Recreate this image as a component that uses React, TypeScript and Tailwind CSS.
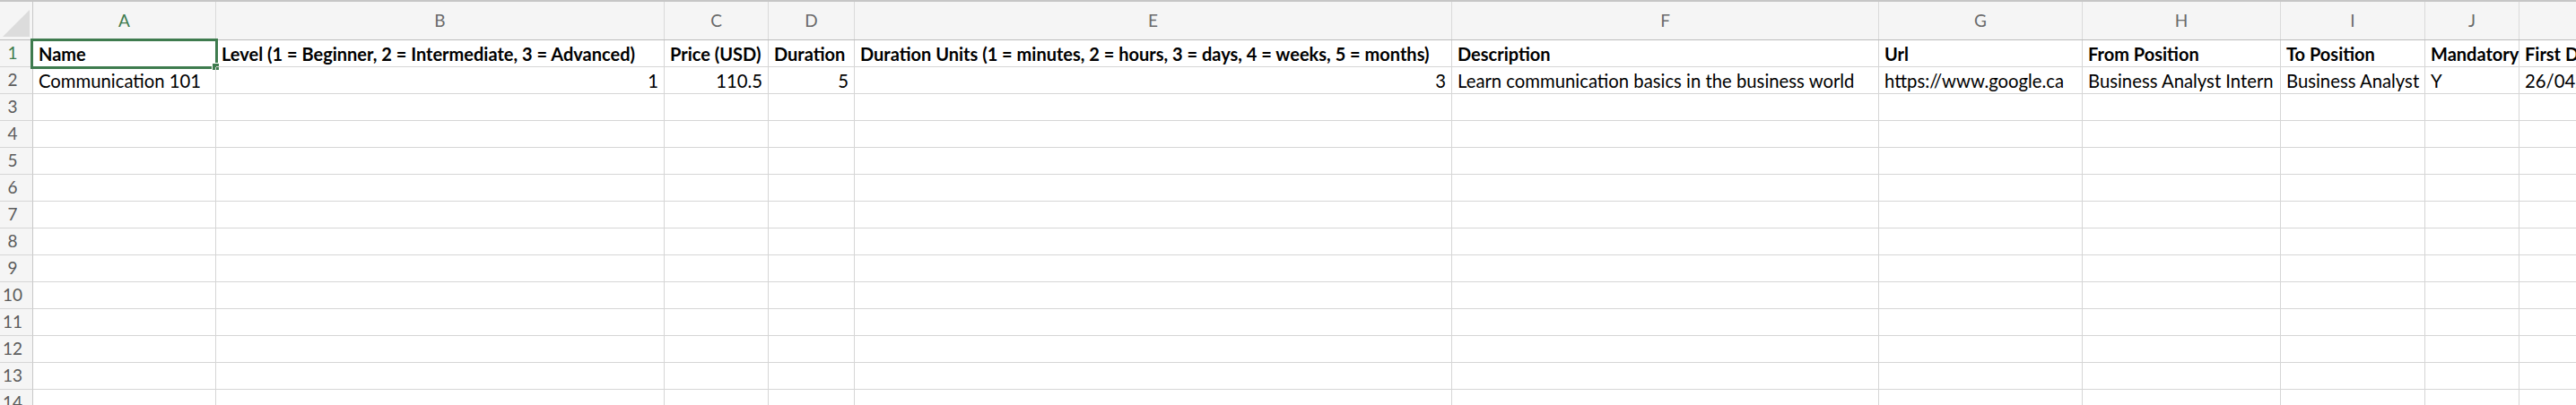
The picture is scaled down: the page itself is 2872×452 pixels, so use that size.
import React from 'react';

const font = { fontFamily: 'Lato, "Open Sans", sans-serif' };

// column widths include the 1px right gridline
const columns = [
  { key: 'A', w: 'w-[204px]' },
  { key: 'B', w: 'w-[500px]' },
  { key: 'C', w: 'w-[116px]' },
  { key: 'D', w: 'w-[96px]' },
  { key: 'E', w: 'w-[666px]' },
  { key: 'F', w: 'w-[476px]' },
  { key: 'G', w: 'w-[227px]' },
  { key: 'H', w: 'w-[221px]' },
  { key: 'I', w: 'w-[161px]' },
  { key: 'J', w: 'w-[105px]' },
  { key: 'K', w: 'w-[220px]' },
];

type Cell = { text: string; num?: boolean; bold?: boolean };

const header: Cell[] = [
  { text: 'Name' },
  { text: 'Level (1 = Beginner, 2 = Intermediate, 3 = Advanced)' },
  { text: 'Price (USD)' },
  { text: 'Duration' },
  { text: 'Duration Units (1 = minutes, 2 = hours, 3 = days, 4 = weeks, 5 = months)' },
  { text: 'Description' },
  { text: 'Url' },
  { text: 'From Position' },
  { text: 'To Position' },
  { text: 'Mandatory' },
  { text: 'First Date' },
].map((c) => ({ ...c, bold: true }));

const dataRow: Cell[] = [
  { text: 'Communication 101' },
  { text: '1', num: true },
  { text: '110.5', num: true },
  { text: '5', num: true },
  { text: '3', num: true },
  { text: 'Learn communication basics in the business world' },
  { text: 'https://www.google.ca' },
  { text: 'Business Analyst Intern' },
  { text: 'Business Analyst' },
  { text: 'Y' },
  { text: '26/04/2021' },
];

const rows: Cell[][] = [header, dataRow];
for (let i = 0; i < 12; i++) rows.push(columns.map(() => ({ text: '' })));

function ColumnHeader() {
  return (
    <div className="flex h-[45px] border-t-2 border-[#c6c6c6] border-b border-b-[#bcbcbc] bg-[#f5f5f5]">
      <div className="relative w-[37px] shrink-0 border-r border-[#c8c8c8]">
        <svg className="absolute left-[3px] top-[9px]" width="30" height="30" viewBox="0 0 30 30">
          <polygon points="30,0 30,30 0,30" fill="#dcdcdc" />
        </svg>
      </div>
      {columns.map((c, i) => (
        <div
          key={c.key}
          className={`${c.w} shrink-0 border-r border-[#dadada] flex items-center justify-center text-[19px] ${
            i === 0 ? 'text-[#3e7b4e]' : 'text-[#6a6a6a]'
          }`}
        >
          {c.key}
        </div>
      ))}
    </div>
  );
}

function Row({ cells, index }: { cells: Cell[]; index: number }) {
  return (
    <div className="flex h-[30px]">
      <div
        className={`w-[37px] shrink-0 bg-[#f5f5f5] border-r border-b border-r-[#c8c8c8] border-b-[#d6d6d6] flex items-center justify-center pr-[8px] text-[19px] ${
          index === 1 ? 'text-[#3e7b4e]' : 'text-[#5b5b5b]'
        }`}
      >
        {index}
      </div>
      {columns.map((c, i) => {
        const cell = cells[i];
        const selected = index === 1 && i === 0;
        return (
          <div
            key={c.key}
            className={`${c.w} relative shrink-0 border-r border-b border-[#d6d6d6] flex items-end pb-[2px] px-[6px] leading-[24px] text-black whitespace-nowrap ${
              cell.num ? 'justify-end' : 'justify-start'
            } ${cell.bold ? 'font-bold text-[20px]' : 'text-[20.3px]'}`}
          >
            <span className={selected ? 'relative z-10' : ''}>{cell.text}</span>
            {selected && (
              <>
                <div className="absolute left-[-3px] top-[-2px] right-[-3px] bottom-[-3px] border-[3px] border-[#3e7b4e] pointer-events-none" />
                <div className="absolute right-[-5px] bottom-[-5px] w-[9px] h-[9px] bg-[#3e7b4e] border border-white" />
              </>
            )}
          </div>
        );
      })}
    </div>
  );
}

export default function App() {
  return (
    <div className="w-[2872px] h-[452px] overflow-hidden bg-white" style={font}>
      <ColumnHeader />
      {rows.map((cells, i) => (
        <Row key={i} cells={cells} index={i + 1} />
      ))}
    </div>
  );
}
